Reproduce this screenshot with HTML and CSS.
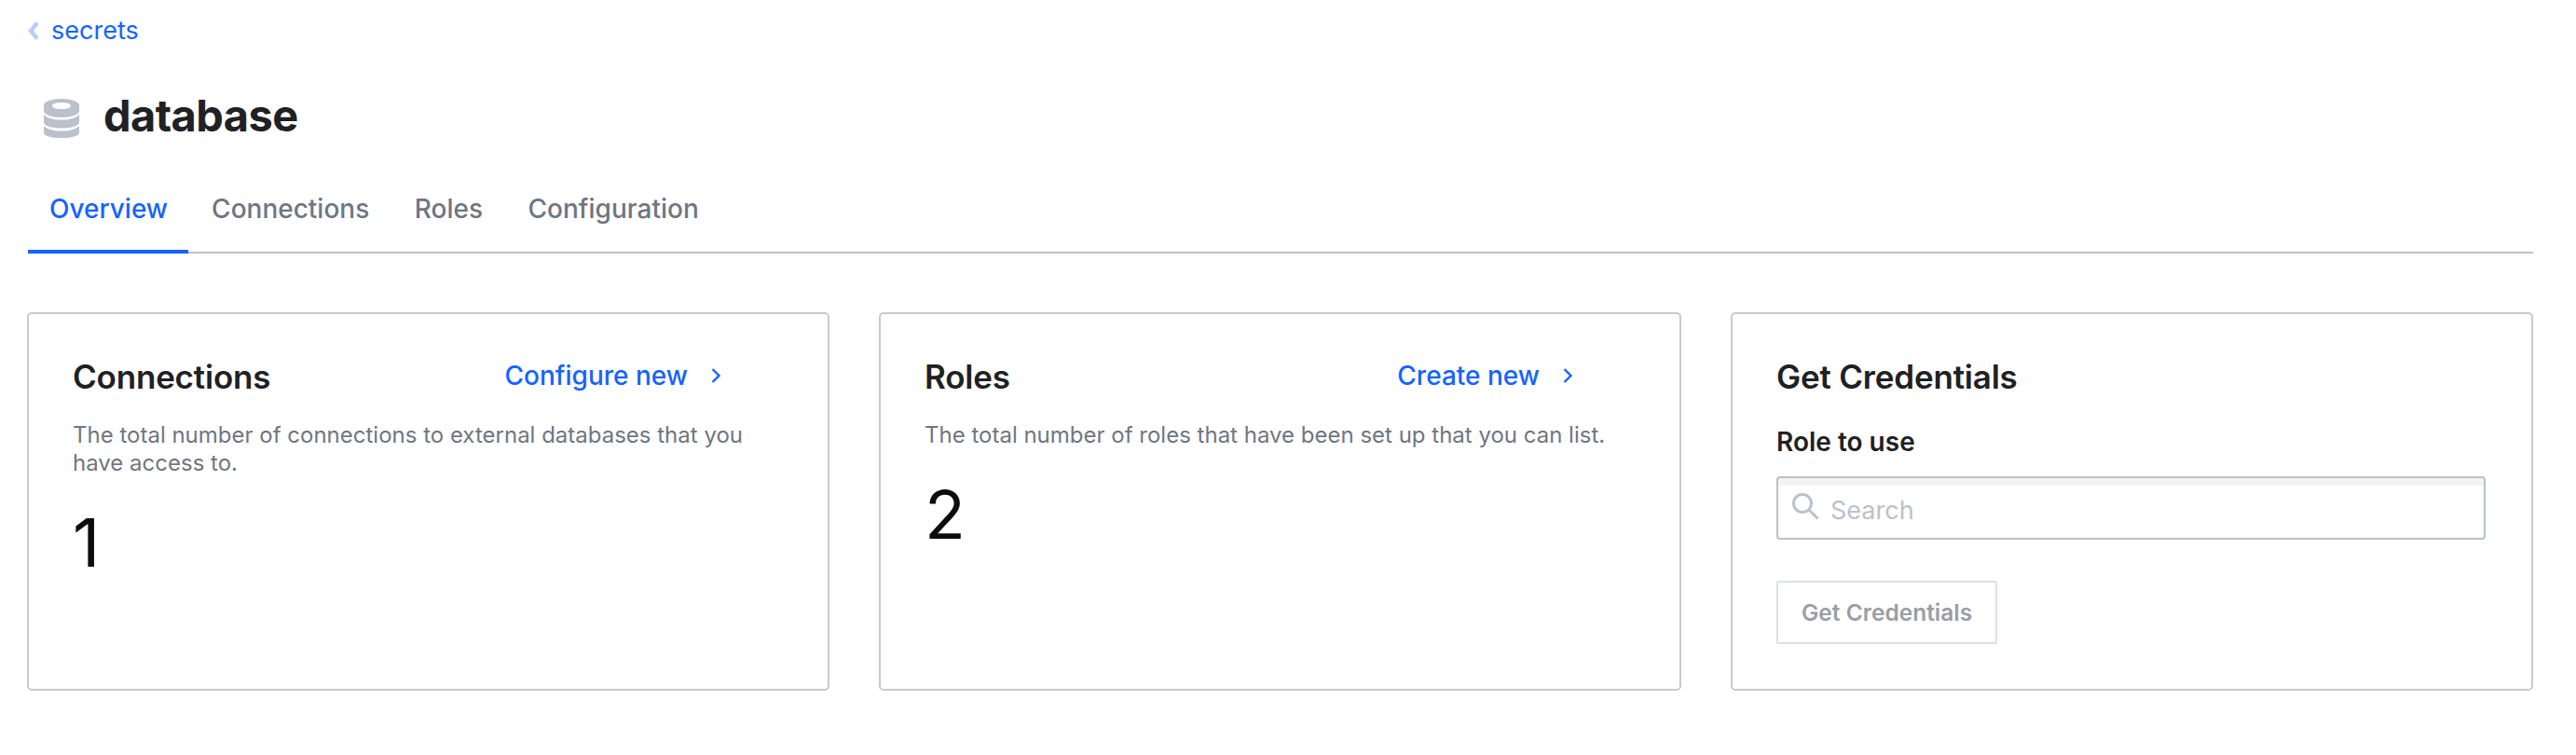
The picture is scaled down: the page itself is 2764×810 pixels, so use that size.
FILE: index.html
```html
<!DOCTYPE html>
<html lang="en">
<head>
<meta charset="utf-8">
<title>database</title>
<link rel="stylesheet" href="styles.css">
</head>
<body>
<main class="page">
  <nav class="crumb">
    <svg class="crumb-icon" viewBox="0 0 12 20" width="12" height="20"><path d="M10 1.500 3 10l7 8.500" fill="none" stroke="#b9cffb" stroke-width="4.500"/></svg>
    <a class="crumb-link">secrets</a>
  </nav>
  <header class="title-row">
    <svg class="db-icon" viewBox="0 0 38 42" width="38" height="42">
      <path fill-rule="evenodd" fill="#bac1cc" d="M19 0c10.500 0 19 3 19 7v6c0 4-8.500 7-19 7S0 17 0 13V7c0-4 8.500-7 19-7Zm0 4c-6 0-10 1.500-10 3.500S13 11 19 11s10-1.500 10-3.500S25 4 19 4Z"/>
      <path fill="#bac1cc" d="M0 17c3 3.500 10 5.500 19 5.500S35 20.500 38 17v8c0 4-8.500 6.500-19 6.500S0 29 0 25Z"/>
      <path fill="#bac1cc" d="M0 29c3 3.500 10 5.500 19 5.500S35 32.500 38 29v7c0 4-8.500 6-19 6S0 40 0 36Z"/>
    </svg>
    <h1 class="title">database</h1>
  </header>
  <div class="tabs">
    <a class="tab tab-active">Overview</a>
    <a class="tab">Connections</a>
    <a class="tab">Roles</a>
    <a class="tab">Configuration</a>
  </div>
  <section class="cards">
    <article class="card">
      <div class="card-head">
        <h2 class="card-title">Connections</h2>
        <a class="action">Configure new
          <svg class="action-icon" viewBox="0 0 12 20" width="12" height="20"><path d="m2.500 3 7 7-7 7" fill="none" stroke="#1563ff" stroke-width="2.400"/></svg>
        </a>
      </div>
      <p class="desc">The total number of connections to external databases that you have access to.</p>
      <div class="count">1</div>
    </article>
    <article class="card">
      <div class="card-head">
        <h2 class="card-title">Roles</h2>
        <a class="action">Create new
          <svg class="action-icon" viewBox="0 0 12 20" width="12" height="20"><path d="m2.500 3 7 7-7 7" fill="none" stroke="#1563ff" stroke-width="2.400"/></svg>
        </a>
      </div>
      <p class="desc">The total number of roles that have been set up that you can list.</p>
      <div class="count">2</div>
    </article>
    <article class="card">
      <div class="card-head">
        <h2 class="card-title">Get Credentials</h2>
      </div>
      <label class="field-label" for="role">Role to use</label>
      <div class="search">
        <svg class="search-icon" viewBox="0 0 30 30" width="30" height="30"><circle cx="12" cy="12" r="9.500" fill="none" stroke="#bac1cc" stroke-width="3"/><path d="m18.500 18.500 10 10" fill="none" stroke="#bac1cc" stroke-width="3"/></svg>
        <input class="search-input" id="role" placeholder="Search">
      </div>
      <button class="btn" disabled>Get Credentials</button>
    </article>
  </section>
</main>
</body>
</html>
```

FILE: styles.css
```css
* { box-sizing: border-box; }
html, body { margin: 0; background: #fff; }
body { font-family: Inter, "Liberation Sans", sans-serif; color: #1f2124; }
.page { padding: 16px 46px 0 29px; }
.crumb { display: flex; align-items: center; gap: 13px; height: 34px; margin-left: 1px; }
.crumb-link { font-size: 27px; line-height: 34px; color: #1563ff; }
.title-row { display: flex; align-items: center; gap: 26px; margin-top: 44px; padding-left: 18px; height: 60px; }
.db-icon { margin-top: 6px; }
.title { margin: 0; font-size: 47px; line-height: 60px; font-weight: 700; letter-spacing: -0.6px; }
.tabs { display: flex; margin: 36px 0 0 1px; height: 82px; border-bottom: 2px solid #bac1cc; }
.tab { padding: 0 23.500px 0 25px; height: 82px; line-height: 68px; font-size: 28px; font-weight: 500; color: #6f7682; }
.tab-active { padding: 0 22px 0 23px; color: #1563ff; border-bottom: 4px solid #1563ff; }
.cards { display: grid; grid-template-columns: repeat(3, 861px); justify-content: space-between; margin-top: 63px; }
.card { height: 406px; padding: 45px 47px 48px; border: 2px solid #c9cacd; border-radius: 5px; }
.card-head { display: flex; justify-content: space-between; align-items: center; height: 44px; }
.card-title { margin: 0; font-size: 35px; line-height: 44px; font-weight: 600; letter-spacing: -0.2px; }
.action { display: flex; align-items: center; gap: 24px; margin: 0 67px 2px 0; font-size: 28px; font-weight: 500; color: #1563ff; }
.desc { margin: 26px 0 0; font-size: 24px; line-height: 30px; color: #6f7682; }
.count { margin-top: 26px; font-size: 72px; line-height: 88px; color: #0c0c0e; }
.field-label { display: block; margin-top: 31px; font-size: 28px; line-height: 34px; font-weight: 600; }
.search { position: relative; margin: 20px 2px 0 0; }
.search-icon { position: absolute; left: 16px; top: 17px; }
.search-input { display: block; width: 100%; height: 68px; padding: 4px 0 0 56px; border: 2px solid #bac1cc; border-radius: 4px; box-shadow: inset 0 8px 0 #f2f2f3; font: 27px Inter, "Liberation Sans", sans-serif; outline: none; background: #fff; }
.search-input::placeholder { color: #bac1cc; opacity: 1; }
.btn { display: block; margin-top: 44px; height: 68px; padding: 0 25px; background: #fff; border: 2px solid #dce0e6; border-radius: 2px; font: 600 24.500px Inter, "Liberation Sans", sans-serif; color: #9a9ea5; }
```
